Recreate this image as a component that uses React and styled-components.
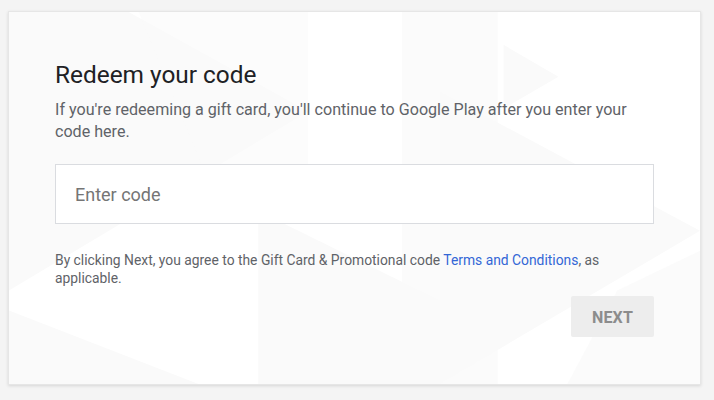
import React from "react";
import styled, { createGlobalStyle } from "styled-components";

const Global = createGlobalStyle`
  html, body { margin: 0; padding: 0; background: #f4f4f4; }
  body { font-family: Roboto, "Noto Sans", Arial, sans-serif; }
`;

const Page = styled.div`
  padding: 11px 14px 15px 8px;
`;

const Card = styled.div`
  position: relative;
  overflow: hidden;
  background: #ffffff;
  border: 1px solid #e6e6e6;
  box-shadow: 0 1px 3px rgba(0, 0, 0, 0.12);
  width: 693px;
  box-sizing: border-box;
`;

const Backdrop = styled.svg`
  position: absolute;
  inset: 0;
  width: 100%;
  height: 100%;
  pointer-events: none;
`;

const Content = styled.div`
  position: relative;
  padding: 47px 46px 47px 46px;
  display: flex;
  flex-direction: column;
`;

const Title = styled.h1`
  margin: 0;
  font-size: 24.4px;
  line-height: 32px;
  font-weight: 400;
  color: #202124;
`;

const Lead = styled.p`
  margin: 8px 0 0;
  font-size: 16.1px;
  line-height: 22px;
  color: #5f6368;
`;

const CodeInput = styled.input`
  margin-top: 21px;
  height: 60px;
  box-sizing: border-box;
  border: 1px solid #dadce0;
  background: #fff;
  padding: 0 19px;
  font-family: inherit;
  font-size: 18px;
  color: #202124;
  outline: none;
  &::placeholder { color: #757575; }
`;

const Terms = styled.p`
  margin: 27px 0 0;
  font-size: 13.85px;
  line-height: 18px;
  color: #5f6368;
`;

const Link = styled.a`
  color: #3367d6;
  text-decoration: none;
`;

const Actions = styled.div`
  display: flex;
  justify-content: flex-end;
  margin-top: 9px;
`;

const NextButton = styled.button`
  width: 83px;
  height: 41px;
  border: none;
  border-radius: 2px;
  background: #ededed;
  color: #8c8c8c;
  font-family: inherit;
  font-size: 16px;
  font-weight: 700;
  letter-spacing: 0.2px;
  padding-top: 2px;
  cursor: default;
`;

export default function App() {
  return (
    <Page>
      <Global />
      <Card>
        <Backdrop viewBox="0 0 693 374" preserveAspectRatio="none">
          <g fill="#fafafa">
            <polygon points="0,0 120,0 300,100 0,280" />
            <polygon points="130,0 300,0 300,180 200,170" opacity="0.6" />
            <polygon points="394,0 490,0 490,374 394,374" opacity="0.7" />
            <polygon points="496,33 551,65 496,97" />
            <polygon points="250,200 432,290 432,374 250,374" />
            <polygon points="432,80 693,220 432,374" />
            <polygon points="0,300 190,374 0,374" />
            <polygon points="610,280 693,240 693,374 560,374" opacity="0.7" />
          </g>
        </Backdrop>
        <Content>
          <Title>Redeem your code</Title>
          <Lead>
            If you're redeeming a gift card, you'll continue to Google Play after you enter your code here.
          </Lead>
          <CodeInput placeholder="Enter code" />
          <Terms>
            By clicking Next, you agree to the Gift Card &amp; Promotional code{" "}
            <Link href="#">Terms and Conditions</Link>, as applicable.
          </Terms>
          <Actions>
            <NextButton>NEXT</NextButton>
          </Actions>
        </Content>
      </Card>
    </Page>
  );
}
